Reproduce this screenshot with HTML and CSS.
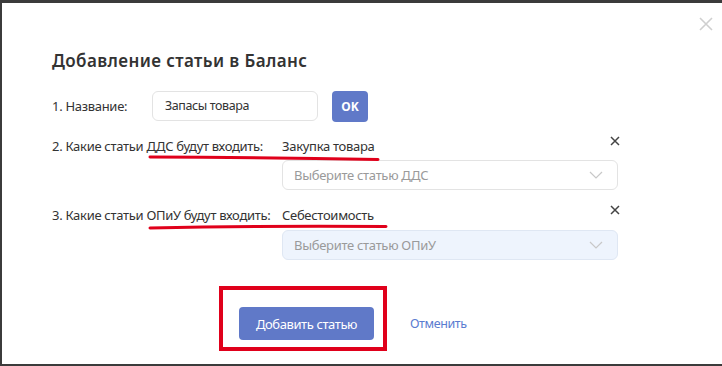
FILE: index.html
```html
<!DOCTYPE html>
<html lang="ru">
<head>
    <meta charset="UTF-8">
    <title>Добавление статьи в Баланс</title>

    <link rel="stylesheet" href="styles.css">
</head>
<body>
    <div class="backdrop-strip"></div>
    <div class="modal">
        <div class="close">
            <svg width="14" height="14" viewBox="0 0 14 14"><path d="M1 1 L13 13 M13 1 L1 13" stroke="#cfcfcf" stroke-width="1.6" fill="none"/></svg>
        </div>

        <div class="modal-title">Добавление статьи в Баланс</div>

        <div class="row row-name">
            <div class="label label-short">1. Название:</div>
            <div class="input">Запасы товара</div>
            <button class="btn-ok">OK</button>
        </div>

        <div class="group">
            <div class="row row-text">
                <div class="label label-long">2. Какие статьи ДДС будут входить:</div>
                <div class="value">Закупка товара</div>
                <div class="remove">
                    <svg width="10" height="10" viewBox="0 0 10 10"><path d="M1 1 L9 9 M9 1 L1 9" stroke="#444" stroke-width="1.5" fill="none"/></svg>
                </div>
                <svg class="mark mark-dds" width="232" height="8" viewBox="0 0 232 8"><path d="M2 3 Q 110 3.5 230 5.5" stroke="#e0001b" stroke-width="3" stroke-linecap="round" fill="none"/></svg>
            </div>
            <div class="select">
                <span>Выберите статью ДДС</span>
                <svg width="14" height="8" viewBox="0 0 14 8"><path d="M1 1 L7 7 L13 1" stroke="#c8c8c8" stroke-width="1.2" fill="none"/></svg>
            </div>
        </div>

        <div class="group">
            <div class="row row-text">
                <div class="label label-long">3. Какие статьи ОПиУ будут входить:</div>
                <div class="value">Себестоимость</div>
                <div class="remove">
                    <svg width="10" height="10" viewBox="0 0 10 10"><path d="M1 1 L9 9 M9 1 L1 9" stroke="#444" stroke-width="1.5" fill="none"/></svg>
                </div>
                <svg class="mark mark-opiu" width="240" height="8" viewBox="0 0 240 8"><path d="M2 5 Q 120 2.5 238 3.5" stroke="#e0001b" stroke-width="3" stroke-linecap="round" fill="none"/></svg>
            </div>
            <div class="select select-active">
                <span>Выберите статью ОПиУ</span>
                <svg width="14" height="8" viewBox="0 0 14 8"><path d="M1 1 L7 7 L13 1" stroke="#c8c8c8" stroke-width="1.2" fill="none"/></svg>
            </div>
        </div>

        <div class="footer">
            <div class="submit-wrap">
                <button class="btn-primary">Добавить статью</button>
                <div class="frame"></div>
            </div>
            <a class="link" href="#">Отменить</a>
        </div>
    </div>
</body>
</html>
```

FILE: styles.css
```css
body {
    margin: 0;
    background: #3b3b3b;
    font-family: "Noto Sans", "Open Sans", sans-serif;
    color: #333333;
    overflow: hidden;
}

.backdrop-strip {
    height: 3px;
}

.modal {
    position: relative;
    margin-left: 2px;
    height: 361px;
    padding: 46px 0 0 50px;
    box-sizing: border-box;
    background: #ffffff;
}

.close {
    position: absolute;
    top: 14px;
    right: 9px;
    width: 14px;
    height: 14px;
}

.close svg {
    display: block;
}

.modal-title {
    font-size: 17px;
    font-weight: 600;
    line-height: 24px;
    color: #333333;
    letter-spacing: 0.4px;
}

.row {
    display: flex;
    align-items: center;
    font-size: 13px;
}

.row-name {
    margin-top: 18px;
    height: 30px;
}

.label {
    flex-shrink: 0;
    color: #333333;
    letter-spacing: -0.3px;
}

.label-short {
    width: 100px;
}

.label-long {
    width: 230px;
}

.input {
    width: 166px;
    height: 30px;
    box-sizing: border-box;
    border: 1px solid #e3e3e3;
    border-radius: 6px;
    padding: 0 12px;
    line-height: 28px;
    font-size: 12.5px;
    color: #333333;
    letter-spacing: -0.4px;
}

.btn-ok {
    margin-left: 14px;
    width: 36px;
    height: 31px;
    border: none;
    border-radius: 4px;
    background: #6079c8;
    color: #ffffff;
    font-family: inherit;
    font-size: 12px;
    font-weight: 700;
    padding: 0;
}

.group {
    width: 568px;
}

.row-text {
    position: relative;
    height: 20px;
    margin-top: 15px;
}

.value {
    flex: 1;
    letter-spacing: -0.3px;
}

.remove {
    width: 10px;
    height: 10px;
    margin: -10px 0 0 0;
}

.remove svg {
    display: block;
}

.mark {
    position: absolute;
    top: 18px;
}

.mark-dds {
    left: 96px;
}

.mark-opiu {
    left: 96px;
    top: 18px;
}

.select {
    display: flex;
    align-items: center;
    justify-content: space-between;
    margin: 4px 0 0 230px;
    width: 336px;
    height: 30px;
    box-sizing: border-box;
    border: 1px solid #e3e3e3;
    border-radius: 6px;
    padding: 0 14px 0 11px;
    font-size: 13px;
    color: #9a9a9a;
    letter-spacing: -0.3px;
}

.select-active {
    margin-top: 5px;
    background: #eef4fd;
    border-color: #dfe7f3;
}

.footer {
    display: flex;
    align-items: center;
    margin-top: 47px;
    padding-left: 187px;
}

.submit-wrap {
    position: relative;
}

.btn-primary {
    display: block;
    width: 135px;
    height: 33px;
    border: none;
    border-radius: 4px;
    background: #6079c8;
    color: #ffffff;
    font-family: inherit;
    font-size: 13px;
    font-weight: 400;
    letter-spacing: -0.4px;
    padding: 0;
}

.frame {
    position: absolute;
    left: -20px;
    top: -21px;
    width: 168px;
    height: 65px;
    box-sizing: border-box;
    border: 4px solid #e0001b;
}

.link {
    margin-left: 36px;
    font-size: 12.5px;
    color: #5a7bd0;
    text-decoration: none;
    letter-spacing: -0.4px;
}
```
